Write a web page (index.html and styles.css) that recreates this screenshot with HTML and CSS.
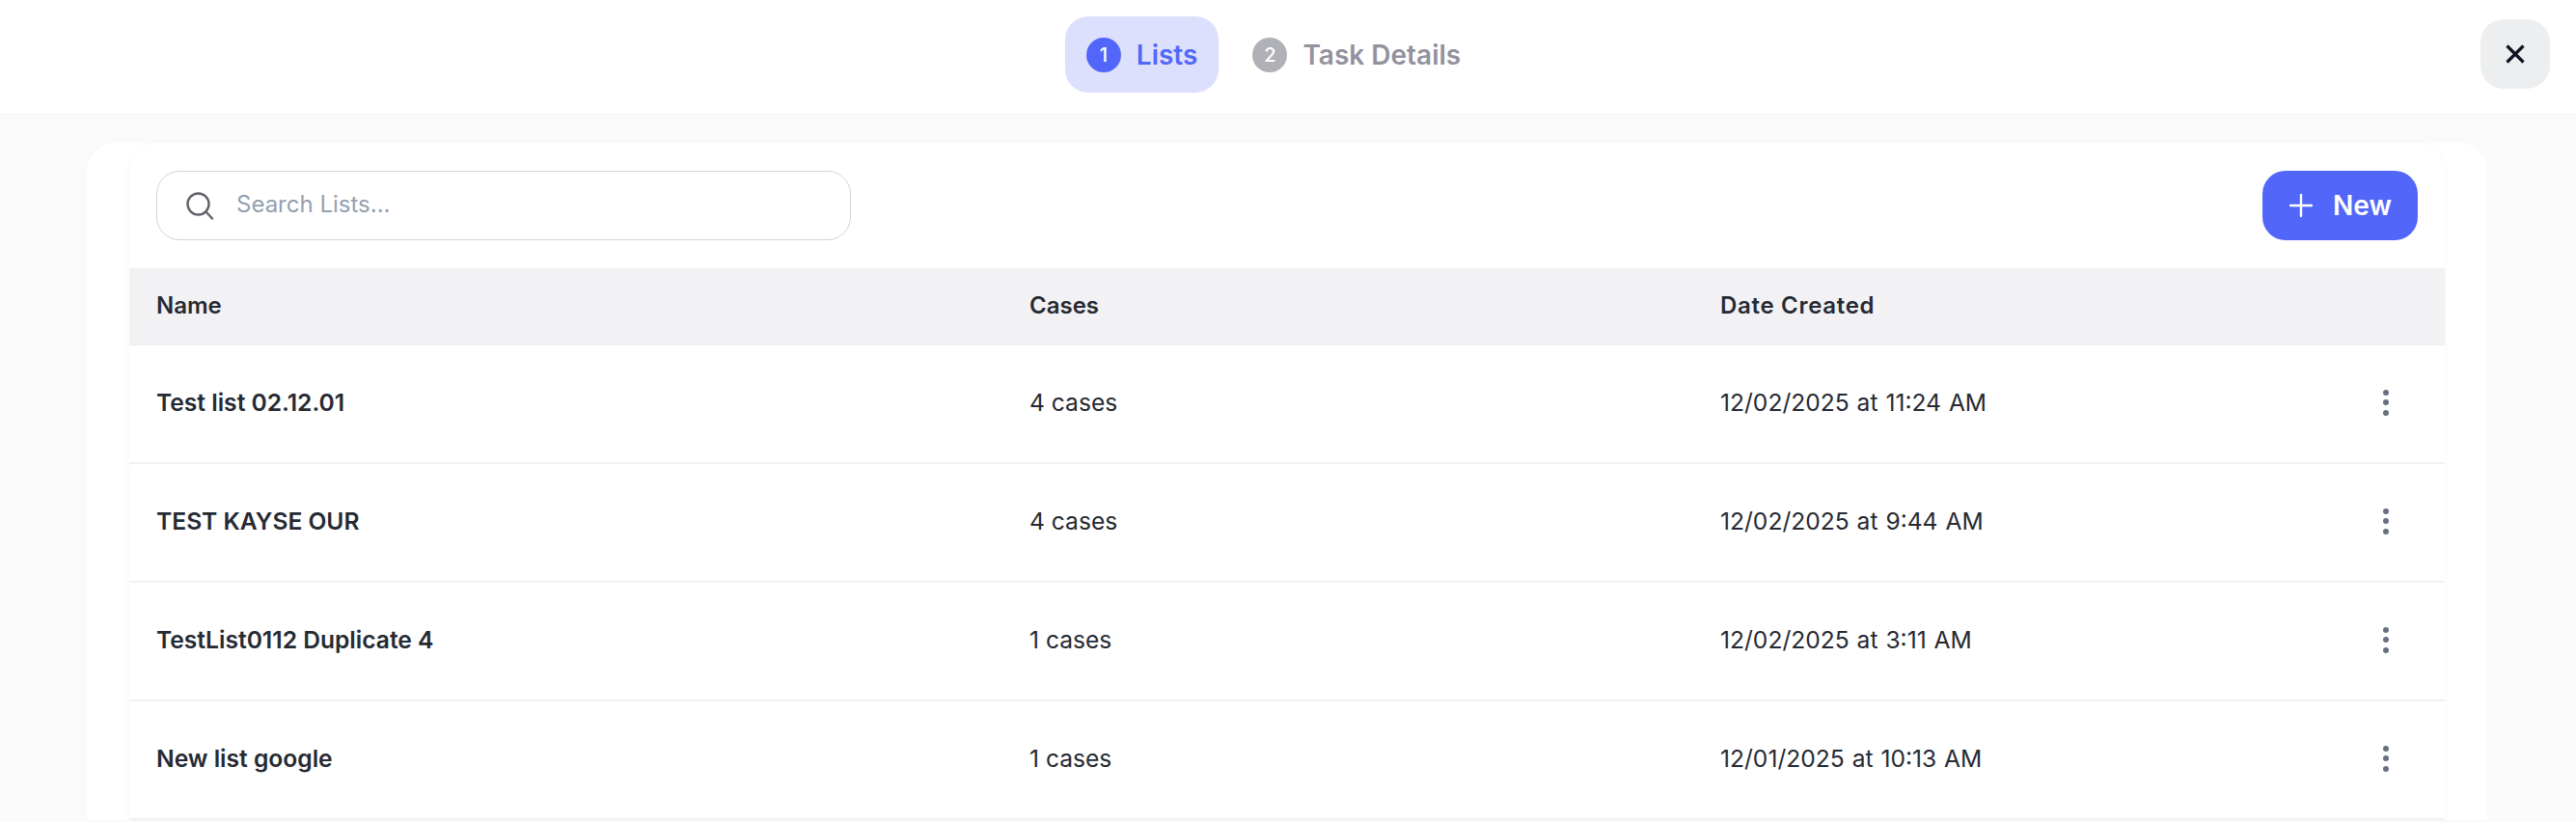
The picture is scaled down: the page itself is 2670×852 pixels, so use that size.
FILE: index.html
```html
<!DOCTYPE html>
<html>
  <head>
    <meta charset="UTF-8" />
    <title>Lists</title>
    <link rel="stylesheet" href="styles.css">
  </head>

  <body>
    <header class="top-bar">
      <nav class="steps">
        <div class="step step-active"><span class="step-number">1</span>Lists</div>
        <div class="step"><span class="step-number">2</span>Task Details</div>
      </nav>
      <button class="close-button" aria-label="Close">
        <svg width="20" height="20" viewBox="0 0 20 20" fill="none" stroke="#111322" stroke-width="3.2">
          <path d="M1.5 1.5L18.5 18.5M18.5 1.5L1.5 18.5" />
        </svg>
      </button>
    </header>

    <main class="content">
      <section class="card">
        <div class="panel">
          <div class="toolbar">
            <label class="search">
              <svg width="30" height="30" viewBox="0 0 30 30" fill="none" stroke="#61616b" stroke-width="2.4" stroke-linecap="round">
                <circle cx="13.5" cy="13.5" r="11" />
                <path d="M21.5 21.5L28 28.5" />
              </svg>
              <input type="text" placeholder="Search Lists..." />
            </label>
            <button class="new-button">
              <svg width="24" height="24" viewBox="0 0 24 24" fill="none" stroke="#fff" stroke-width="2.4" stroke-linecap="round">
                <path d="M12 1V23M1 12H23" />
              </svg>
              New
            </button>
          </div>

          <div class="row head-row">
            <div>Name</div>
            <div>Cases</div>
            <div class="date-head">Date Created</div>
            <div></div>
          </div>

          <div class="row">
            <div class="list-name">Test list 02.12.01</div>
            <div>4 cases</div>
            <div class="date">12/02/2025 at 11:24 AM</div>
            <div class="dots"><i></i><i></i><i></i></div>
          </div>
          <div class="row">
            <div class="list-name">TEST KAYSE OUR</div>
            <div>4 cases</div>
            <div class="date">12/02/2025 at 9:44 AM</div>
            <div class="dots"><i></i><i></i><i></i></div>
          </div>
          <div class="row">
            <div class="list-name">TestList0112 Duplicate 4</div>
            <div>1 cases</div>
            <div class="date">12/02/2025 at 3:11 AM</div>
            <div class="dots"><i></i><i></i><i></i></div>
          </div>
          <div class="row">
            <div class="list-name">New list google</div>
            <div>1 cases</div>
            <div class="date">12/01/2025 at 10:13 AM</div>
            <div class="dots"><i></i><i></i><i></i></div>
          </div>
        </div>
      </section>
    </main>
  </body>
</html>
```

FILE: styles.css
```css
* {
  box-sizing: border-box;
}

html,
body {
  height: 100%;
}

body {
  margin: 0;
  overflow: hidden;
  font-family: Inter, "Noto Sans", sans-serif;
  font-size: 24px;
  line-height: 28px;
  color: #262a33;
  background-color: #fafafa;
}

.top-bar {
  position: relative;
  display: flex;
  justify-content: center;
  height: 119px;
  padding-top: 17px;
  background-color: #fff;
  border-bottom: 1px solid #f2f2f4;
}

.steps {
  display: flex;
  gap: 13px;
  margin-right: 30px;
}

.step {
  display: flex;
  align-items: center;
  gap: 16px;
  height: 79px;
  padding: 0 22px;
  border-radius: 24px;
  font-size: 28px;
  font-weight: 600;
  color: #92929e;
}

.step-number {
  display: flex;
  align-items: center;
  justify-content: center;
  width: 36px;
  height: 36px;
  border-radius: 50%;
  font-size: 20px;
  font-weight: 500;
  color: #fff;
  background-color: #b0b0b7;
}

.step-active {
  color: #5267f9;
  background-color: #dde0fc;
}

.step-active .step-number {
  background-color: #5267f9;
}

/* sits over the bar so the steps stay centred */
.close-button {
  position: absolute;
  top: 20px;
  right: 27px;
  display: flex;
  align-items: center;
  justify-content: center;
  width: 72px;
  height: 72px;
  padding: 0;
  border: none;
  border-radius: 24px;
  background-color: #edeef0;
}

.content {
  padding: 29px 92px 0 90px;
}

.card {
  padding: 0 44px;
  background-color: #fff;
  border-radius: 30px 30px 0 0;
}

.panel {
  border-radius: 30px 30px 0 0;
  box-shadow: 0 0 6px rgba(0, 0, 0, 0.03);
}

.toolbar {
  display: flex;
  align-items: center;
  justify-content: space-between;
  padding: 29px 28px;
}

.search {
  display: flex;
  align-items: center;
  gap: 23px;
  width: 720px;
  height: 72px;
  padding: 0 29px 2px;
  border: 1px solid #d2d3d6;
  border-radius: 24px;
}

.search svg {
  margin-top: 2px;
}

.search input {
  flex: 1;
  padding: 0;
  border: none;
  outline: none;
  font: inherit;
  color: #262a33;
}

.search input::placeholder {
  color: #94a0b0;
}

.new-button {
  display: flex;
  align-items: center;
  gap: 21px;
  width: 161px;
  height: 72px;
  padding: 0 0 0 28px;
  border: none;
  border-radius: 24px;
  font-family: inherit;
  font-size: 28px;
  font-weight: 600;
  color: #fff;
  background-color: #5267f9;
}

.row {
  display: grid;
  grid-template-columns: 905px 716px 1fr 100px;
  align-items: center;
  height: 123px;
  padding-left: 28px;
  padding-bottom: 3px;
  border-bottom: 2px solid #f1f1f3;
  font-size: 24.6px;
}

.head-row {
  height: 80px;
  padding-bottom: 2px;
  font-size: 24px;
  font-weight: 600;
  background-color: #f2f2f5;
  border-bottom: 1px solid #ececef;
}

.date-head {
  letter-spacing: 0.7px;
}

.date {
  word-spacing: 1px;
}

.list-name {
  font-weight: 600;
}

.dots {
  display: flex;
  flex-direction: column;
  align-items: center;
  gap: 4.5px;
  margin-right: 22px;
}

.dots i {
  width: 6px;
  height: 6px;
  border-radius: 50%;
  background-color: #667080;
}
```
